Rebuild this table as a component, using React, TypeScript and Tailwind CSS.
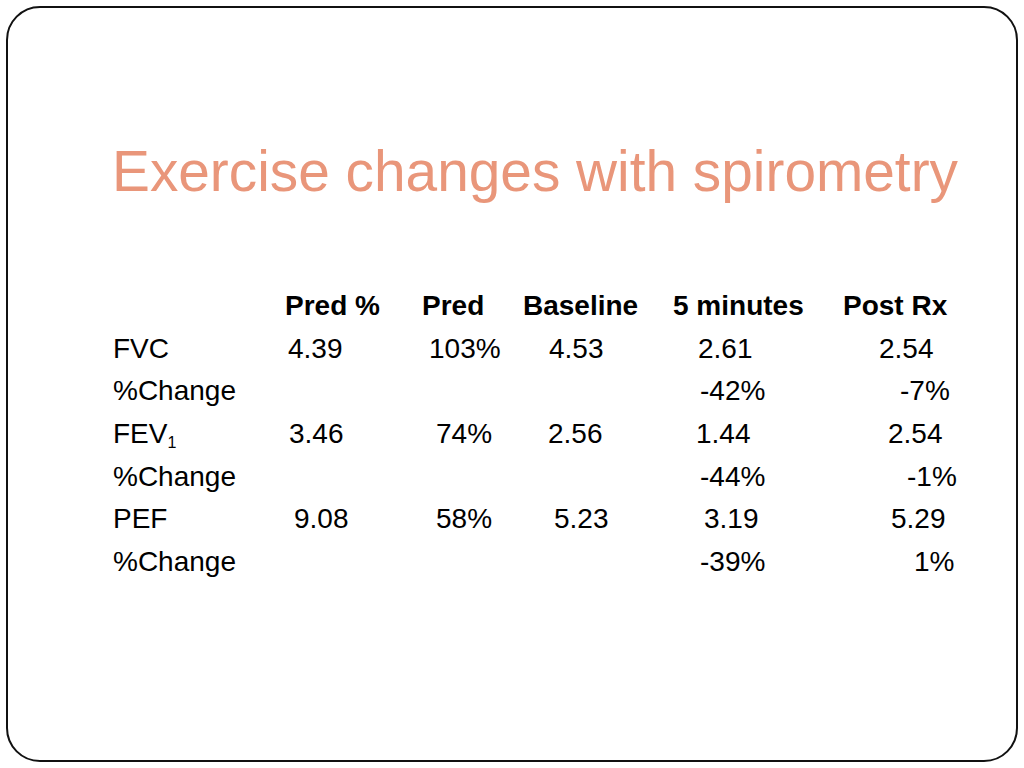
const cols = "grid grid-cols-[172px_137px_101px_150px_170px_1fr]";

type Cell = { text: React.ReactNode; pad: string };

const rows: Cell[][] = [
  [
    { text: "FVC", pad: "" },
    { text: "4.39", pad: "pl-[3px]" },
    { text: "103%", pad: "pl-[7px]" },
    { text: "4.53", pad: "pl-[26px]" },
    { text: "2.61", pad: "pl-[25px]" },
    { text: "2.54", pad: "pl-[36px]" },
  ],
  [
    { text: "%Change", pad: "" },
    { text: "", pad: "" },
    { text: "", pad: "" },
    { text: "", pad: "" },
    { text: "-42%", pad: "pl-[27px]" },
    { text: "-7%", pad: "pl-[57px]" },
  ],
  [
    {
      text: (
        <>
          FEV<sub className="text-[16px] -bottom-[5px]">1</sub>
        </>
      ),
      pad: "",
    },
    { text: "3.46", pad: "pl-[4px]" },
    { text: "74%", pad: "pl-[14px]" },
    { text: "2.56", pad: "pl-[25px]" },
    { text: "1.44", pad: "pl-[23px]" },
    { text: "2.54", pad: "pl-[45px]" },
  ],
  [
    { text: "%Change", pad: "" },
    { text: "", pad: "" },
    { text: "", pad: "" },
    { text: "", pad: "" },
    { text: "-44%", pad: "pl-[27px]" },
    { text: "-1%", pad: "pl-[64px]" },
  ],
  [
    { text: "PEF", pad: "" },
    { text: "9.08", pad: "pl-[9px]" },
    { text: "58%", pad: "pl-[14px]" },
    { text: "5.23", pad: "pl-[31px]" },
    { text: "3.19", pad: "pl-[31px]" },
    { text: "5.29", pad: "pl-[48px]" },
  ],
  [
    { text: "%Change", pad: "" },
    { text: "", pad: "" },
    { text: "", pad: "" },
    { text: "", pad: "" },
    { text: "-39%", pad: "pl-[27px]" },
    { text: "1%", pad: "pl-[71px]" },
  ],
];

const headers = ["", "Pred %", "Pred", "Baseline", "5 minutes", "Post Rx"];

export default function App() {
  return (
    <div className="w-[1024px] h-[768px] bg-white p-[6px] font-['Liberation_Sans',Arial,sans-serif] text-black">
      <div className="h-full border-2 border-[#111] rounded-[34px] pl-[105px] pt-[135px]">
        <h1 className="-ml-[1px] text-[56.8px] leading-[57px] text-[#E9967A] font-normal">
          Exercise changes with spirometry
        </h1>
        <div className="mt-[85px] text-[28px] leading-[42.67px]">
          <div className={`${cols} font-bold`}>
            {headers.map((h, i) => (
              <div key={i} className="whitespace-nowrap">
                {h}
              </div>
            ))}
          </div>
          {rows.map((row, r) => (
            <div key={r} className={cols}>
              {row.map((c, i) => (
                <div key={i} className={`whitespace-nowrap ${c.pad}`}>
                  {c.text}
                </div>
              ))}
            </div>
          ))}
        </div>
      </div>
    </div>
  );
}
